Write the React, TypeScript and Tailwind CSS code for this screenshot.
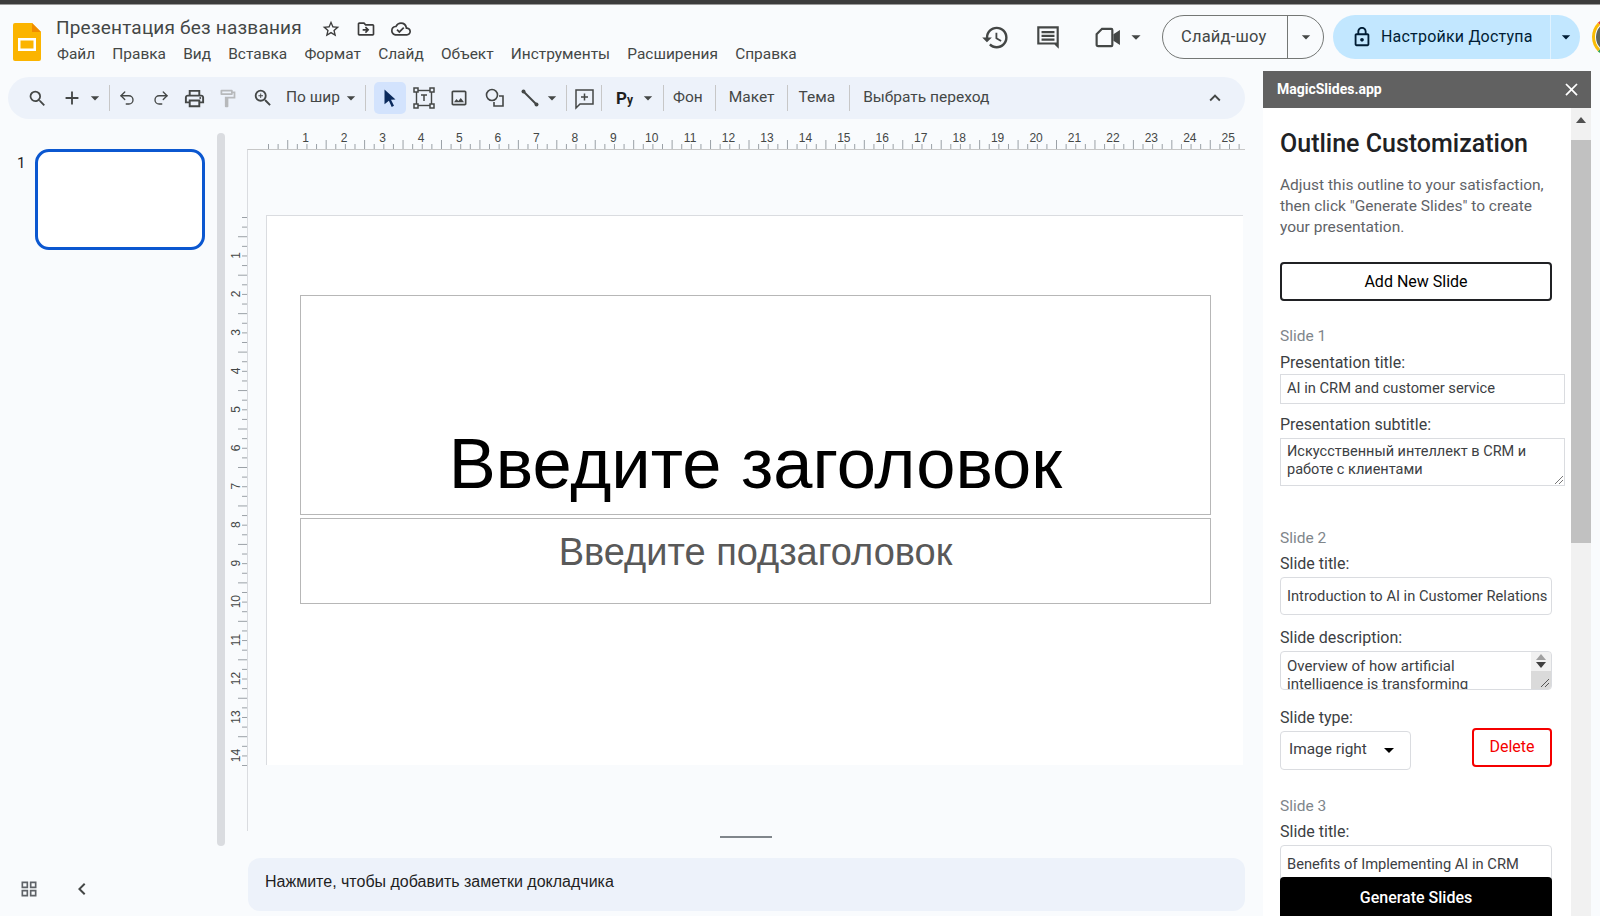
import {
  MdSearch, MdAdd, MdArrowDropDown, MdOutlinePrint, MdOutlineFormatPaint, MdOutlineZoomIn,
  MdOutlineImage, MdExpandLess, MdHistory, MdOutlineLock, MdStarBorder,
  MdOutlineDriveFileMove, MdOutlineCloudDone, MdClose, MdOutlineGridView, MdChevronLeft,
} from 'react-icons/md'
import { Undo2, Redo2 } from 'lucide-react'

const sans = 'font-["Roboto",sans-serif]'
const menu = ['Файл', 'Правка', 'Вид', 'Вставка', 'Формат', 'Слайд', 'Объект', 'Инструменты', 'Расширения', 'Справка']

function Sep() {
  return <div className="w-px h-[26px] bg-[#c7c7c7] mx-[4px] shrink-0" />
}

function TopRuler() {
  const ticks = []
  for (let i = 0; i < 102; i++) {
    const x = 0.5 + i * 9.61
    const long = i % 4 === 2
    ticks.push(<line key={i} x1={x} x2={x} y1={long ? 9 : 13} y2={18} stroke="#9aa0a6" strokeWidth="1" />)
  }
  const labels = []
  for (let n = 1; n <= 25; n++) {
    labels.push(
      <text key={n} x={37.7 + (n - 1) * 38.44} y={11} textAnchor="middle" fontSize="12" fill="#444746" fontFamily="Liberation Sans">{n}</text>
    )
  }
  return (
    <svg width="976" height="18" className="block">
      {ticks}
      {labels}
    </svg>
  )
}

function LeftRuler() {
  const ticks = []
  for (let i = 0; i < 58; i++) {
    const y = 0.5 + i * 9.615
    const long = i % 4 === 2
    ticks.push(<line key={i} x1={long ? 9 : 13} x2="18" y1={y} y2={y} stroke="#9aa0a6" />)
  }
  const labels = []
  for (let n = 1; n <= 14; n++) {
    const y = 38.5 + (n - 1) * 38.46
    labels.push(
      <text key={n} x="0" y="0" transform={`translate(11 ${y}) rotate(-90)`} textAnchor="middle" fontSize="12" fill="#444746" fontFamily="Liberation Sans">{n}</text>
    )
  }
  return <svg width="18" height="549" className="block">{ticks}{labels}</svg>
}

function PanelLabel({ children }: { children: React.ReactNode }) {
  return <div className="text-[16px] leading-[20px] text-[#3c4043]">{children}</div>
}

function SlideTag({ children }: { children: React.ReactNode }) {
  return <div className="text-[15.500px] leading-[20px] text-[#80868b]">{children}</div>
}

export default function App() {
  return (
    <div className={`w-[1600px] h-[916px] overflow-hidden bg-[#f9fbfd] flex flex-col ${sans}`}>
      <div className="h-[5px] shrink-0 bg-[#3c3c3c] border-b border-[#9a9a9a]" />

      {/* header */}
      <header className="h-[66px] shrink-0 flex items-start">
        <svg width="28" height="38" viewBox="0 0 28 38" className="ml-[13px] mt-[18px] shrink-0">
          <path d="M2 0h17l9 9v27a2 2 0 0 1-2 2H2a2 2 0 0 1-2-2V2a2 2 0 0 1 2-2z" fill="#fbb400" />
          <path d="M19 0l9 9h-9z" fill="#f08c00" />
          <path d="M5 15h18v13H5zM7.500 17.500v8h13v-8z" fill="#fff" fillRule="evenodd" />
        </svg>
        <div className="ml-[15px] pt-[11px]">
          <div className="flex items-center h-[24px]">
            <span className="text-[19px] tracking-[0.2px] leading-[24px] text-[#444746]">Презентация без названия</span>
            <MdStarBorder className="ml-[19px] mt-[2px] text-[20px] text-[#3c3c3c]" />
            <MdOutlineDriveFileMove className="ml-[15px] mt-[2px] text-[20px] text-[#3c3c3c]" />
            <MdOutlineCloudDone className="ml-[15px] mt-[2px] text-[20px] text-[#3c3c3c]" />
          </div>
          <nav className="flex gap-[17.200px] ml-[1px] mt-[4px] text-[15.450px] leading-[20px] text-[#444746]">
            {menu.map((m) => <span key={m}>{m}</span>)}
          </nav>
        </div>
        <div className="ml-auto -mr-[32px] flex items-center h-[44px] mt-[10px]">
          <MdHistory className="text-[29px] text-[#444746]" />
          <svg width="28" height="28" viewBox="0 0 26 26" className="ml-[24px]">
            <path d="M3 3h20v21l-4-4H3z M5 5v13h16V5z" fill="#444746" fillRule="evenodd" />
            <path d="M7 7.500h12v2H7zM7 11h12v2H7zM7 14.500h12v2H7z" fill="#444746" />
          </svg>
          <svg width="26" height="21" viewBox="0 0 24 19" className="ml-[33px]">
            <path d="M6.500 1.500H15a1 1 0 0 1 1 1v14a1 1 0 0 1-1 1H3a1.500 1.500 0 0 1-1.500-1.500V6.500z" fill="none" stroke="#444746" strokeWidth="2" />
            <path d="M17 6.500l6-4v14l-6-4z" fill="#444746" />
          </svg>
          <MdArrowDropDown className="ml-[4px] text-[22px] text-[#444746]" />
          <div className="ml-[15px] h-[44px] w-[162px] rounded-full border border-[#747775] flex items-center text-[16.500px] tracking-[0.2px] text-[#444746]">
            <span className="w-[124px] pl-[18px] pt-[1px]">Слайд-шоу</span>
            <div className="w-px h-full bg-[#747775]" />
            <div className="flex-1 flex justify-center"><MdArrowDropDown className="text-[20px]" /></div>
          </div>
          <div className="ml-[9px] h-[44px] w-[247px] rounded-full bg-[#c2e7ff] flex items-center text-[16px] tracking-[0.2px] text-[#001d35]">
            <MdOutlineLock className="ml-[18px] text-[22px]" />
            <span className="ml-[8px] w-[169px] whitespace-nowrap">Настройки Доступа</span>
            <div className="w-px h-full bg-[#e0f2ff]" />
            <div className="flex-1 flex justify-center"><MdArrowDropDown className="text-[20px]" /></div>
          </div>
          <div className="ml-[12px] w-[40px] h-[40px] rounded-full shrink-0 border-[3px] border-t-[#ea4335] border-l-[#fbbc04] border-b-[#34a853] border-r-[#4285f4] p-[1px]">
            <div className="w-full h-full rounded-full bg-[#5f645c]" />
          </div>
        </div>
      </header>

      <div className="flex-1 flex min-h-0">
        {/* left side */}
        <div className="w-[1263px] shrink-0 flex flex-col">
          <div className="mt-[6px] ml-[8px] w-[1237px] h-[42px] rounded-full bg-[#edf2fa] flex items-center text-[#444746] shrink-0 pl-[19px] pr-[19px]">
            <MdSearch className="text-[21px]" />
            <MdAdd className="text-[22px] ml-[13px]" />
            <MdArrowDropDown className="text-[20px] ml-[2px]" />
            <Sep />
            <Undo2 size={18} strokeWidth={1.800} className="ml-[4px]" />
            <Redo2 size={18} strokeWidth={1.800} className="ml-[16px]" />
            <MdOutlinePrint className="text-[23px] ml-[13px]" />
            <MdOutlineFormatPaint className="text-[21px] ml-[11px] text-[#b7b9bb]" />
            <MdOutlineZoomIn className="text-[22px] ml-[14px]" />
            <span className="ml-[12px] text-[15.500px]">По шир</span>
            <MdArrowDropDown className="text-[20px] ml-[1px]" />
            <Sep />
            <div className="ml-[4px] w-[32px] h-[32px] rounded-[5px] bg-[#d3e3fd] flex items-center justify-center">
              <svg width="16" height="20" viewBox="0 0 16 20">
                <path d="M2.500 1.500l11 10-4.500.3 3 6-2.300 1.100-2.800-6.200-4.400 3.600z" fill="#0b2a5c" />
              </svg>
            </div>
            <svg width="22" height="22" viewBox="0 0 22 22" className="ml-[7px]" fill="none" stroke="#444746">
              <rect x="3.500" y="3.500" width="15" height="15" strokeWidth="1.400" />
              <rect x="1" y="1" width="4" height="4" fill="#edf2fa" strokeWidth="1.500" />
              <rect x="17" y="1" width="4" height="4" fill="#edf2fa" strokeWidth="1.500" />
              <rect x="1" y="17" width="4" height="4" fill="#edf2fa" strokeWidth="1.500" />
              <rect x="17" y="17" width="4" height="4" fill="#edf2fa" strokeWidth="1.500" />
              <path d="M8 8h6M11 8v6" strokeWidth="1.500" />
            </svg>
            <MdOutlineImage className="text-[20px] ml-[14px]" />
            <svg width="22" height="22" viewBox="0 0 22 22" className="ml-[15px]" fill="none" stroke="#444746" strokeWidth="1.600">
              <circle cx="8" cy="8" r="5.500" />
              <path d="M15 9h4v10H10v-4" />
            </svg>
            <svg width="20" height="20" viewBox="0 0 20 20" className="ml-[14px]">
              <path d="M3 3l14 14" stroke="#444746" strokeWidth="2" />
              <circle cx="3.500" cy="3.500" r="2" fill="#444746" />
              <circle cx="16.500" cy="16.500" r="2" fill="#444746" />
            </svg>
            <MdArrowDropDown className="text-[20px] ml-[2px]" />
            <Sep />
            <svg width="23" height="23" viewBox="0 0 23 23" className="ml-[2px] shrink-0" fill="none" stroke="#444746" strokeWidth="1.500">
              <path d="M3 3h17v14H7l-4 4z" />
              <path d="M11.500 6.500v7M8 10h7" />
            </svg>
            <div className="w-px h-[26px] bg-[#c7c7c7] ml-[5px] mr-[4px] shrink-0" />
            <span className="ml-[10px] font-bold text-[17px] text-[#1f1f1f] leading-none">Р<span className="text-[12px]">у</span></span>
            <MdArrowDropDown className="text-[20px] ml-[5px]" />
            <div className="w-px h-[26px] bg-[#c7c7c7] ml-[5px] mr-[4px] shrink-0" />
            <span className="ml-[5px] text-[15.500px]">Фон</span>
            <div className="w-px h-[26px] bg-[#c7c7c7] ml-[12px] mr-[13px] shrink-0" />
            <span className="text-[15.500px]">Макет</span>
            <div className="w-px h-[26px] bg-[#c7c7c7] ml-[12px] mr-[11px] shrink-0" />
            <span className="text-[15.500px]">Тема</span>
            <div className="w-px h-[26px] bg-[#c7c7c7] ml-[14px] mr-[13px] shrink-0" />
            <span className="text-[15.500px]">Выбрать переход</span>
            <MdExpandLess className="ml-auto text-[22px]" />
          </div>

          <div className="flex-1 flex min-h-0 pt-[12px]">
            {/* filmstrip */}
            <div className="w-[225px] shrink-0 flex flex-col pt-[2px]">
              <div className="flex flex-1 min-h-0">
                <div className="w-[217px] flex pt-[16px]">
                  <span className="ml-[17px] mt-[4px] w-[18px] text-[15px] leading-[20px] text-[#1f1f1f]">1</span>
                  <div className="w-[170px] h-[101px] rounded-[14px] border-[3px] border-[#0b57d0] bg-white" />
                </div>
                <div className="w-[8px] h-[713px] rounded-full bg-[#dadce0]" />
              </div>
              <div className="h-[60px] shrink-0 flex items-center pl-[19px] pt-[6px]">
                <MdOutlineGridView className="text-[20px] text-[#5f6368]" />
                <MdChevronLeft className="ml-[31px] text-[24px] text-[#444746]" />
              </div>
            </div>

            {/* vertical ruler */}
            <div className="w-[22px] shrink-0 pt-[86px] pl-[4px]">
              <LeftRuler />
            </div>

            {/* canvas */}
            <div className="w-[998px] shrink-0 flex flex-col">
              <div className="h-[18px] shrink-0 pl-[21px]">
                <TopRuler />
              </div>
              <div className="h-[682px] shrink-0 border-l border-t border-l-[#dadce0] border-t-[#c7c7c7] overflow-hidden">
                <div className="mt-[65px] ml-[18px] w-[977px] h-[550px] bg-white border-l border-t border-[#dadce0] overflow-hidden">
                  <div className="ml-[33px] mt-[79px] w-[911px] h-[220px] border border-[#b7b7b7] flex items-end justify-center">
                    <span className="font-['Liberation_Sans',sans-serif] text-[70.500px] leading-[82px] pb-[9px] text-black">Введите заголовок</span>
                  </div>
                  <div className="ml-[33px] mt-[3px] w-[911px] h-[86px] border border-[#b7b7b7] flex justify-center">
                    <span className="font-['Liberation_Sans',sans-serif] text-[38px] leading-[44px] pt-[11px] text-[#595959]">Введите подзаголовок</span>
                  </div>
                </div>
              </div>
              <div className="h-[27px] shrink-0 flex justify-center pt-[5px]">
                <div className="w-[52px] h-[2px] bg-[#80868b]" />
              </div>
              <div className="ml-[1px] h-[53px] shrink-0 rounded-[12px] bg-[#edf2fa] flex items-center pl-[17px] pb-[6px] font-['Liberation_Sans',sans-serif] text-[16px] text-[#1f1f1f]">
                Нажмите, чтобы добавить заметки докладчика
              </div>
            </div>
          </div>
        </div>

        {/* MagicSlides panel */}
        <aside className="w-[328px] shrink-0 flex flex-col bg-white relative">
          <div className="h-[37px] shrink-0 bg-[#616161] flex items-center justify-between pl-[14px] pr-[9px] text-white">
            <span className="text-[14px] font-bold">MagicSlides.app</span>
            <MdClose className="text-[21px]" />
          </div>
          <div className="flex-1 min-h-0 flex">
            <div className="w-[308px] overflow-hidden pl-[17px] pr-[2px] relative">
              <h1 className="mt-[20px] text-[25px] leading-[32px] font-medium text-[#202124]">Outline Customization</h1>
              <p className="mt-[15px] w-[272px] text-[15.500px] leading-[21px] text-[#5f6368]">
                Adjust this outline to your satisfaction, then click "Generate Slides" to create your presentation.
              </p>
              <button className="mt-[23.500px] w-[272px] h-[39px] rounded-[4px] border-2 border-[#202124] text-[16px] text-black pt-[1px]">Add New Slide</button>

              <div className="mt-[25px]"><SlideTag>Slide 1</SlideTag></div>
              <div className="mt-[7px]"><PanelLabel>Presentation title:</PanelLabel></div>
              <div className="mt-[1px] w-[285px] h-[30px] border border-[#dadce0] flex items-center pl-[6px] text-[14.700px] text-[#3c4043]">AI in CRM and customer service</div>
              <div className="mt-[11px]"><PanelLabel>Presentation subtitle:</PanelLabel></div>
              <div className="relative mt-[3px] w-[285px] h-[48px] border border-[#dadce0] pl-[6px] pt-[4px] text-[14.500px] leading-[18.500px] text-[#3c4043]">
                <div className="w-[260px]">Искусственный интеллект в CRM и работе с клиентами</div>
                <svg width="10" height="10" viewBox="0 0 10 10" className="absolute right-0 bottom-0" stroke="#777">
                  <path d="M1 9l8-8M5 9l4-4" />
                </svg>
              </div>

              <div className="mt-[42px]"><SlideTag>Slide 2</SlideTag></div>
              <div className="mt-[6px]"><PanelLabel>Slide title:</PanelLabel></div>
              <div className="mt-[3px] w-[272px] h-[38px] rounded-[4px] border border-[#dadce0] flex items-center pl-[6px] pt-[2px] text-[14.700px] text-[#3c4043] whitespace-nowrap overflow-hidden">Introduction to AI in Customer Relations</div>
              <div className="mt-[13px]"><PanelLabel>Slide description:</PanelLabel></div>
              <div className="relative mt-[3px] w-[272px] h-[39px] rounded-[4px] border border-[#dadce0] overflow-hidden pl-[6px] pt-[5px] text-[15px] leading-[18.500px] text-[#3c4043]">
                <div className="w-[225px]">Overview of how artificial intelligence is transforming</div>
                <div className="absolute right-0 top-0 bottom-0 w-[20px] bg-[#dadada] flex flex-col items-center">
                  <div className="w-full h-[19px] bg-[#f1f1f1] flex flex-col items-center justify-center gap-[2px]">
                    <div className="w-0 h-0 border-x-[5px] border-x-transparent border-b-[6px] border-b-[#a0a0a0]" />
                    <div className="w-0 h-0 border-x-[5px] border-x-transparent border-t-[6px] border-t-[#404040]" />
                  </div>
                </div>
                <svg width="10" height="10" viewBox="0 0 10 10" className="absolute right-[1px] bottom-[1px]" stroke="#555">
                  <path d="M1 9l8-8M5 9l4-4" />
                </svg>
              </div>
              <div className="mt-[18px]"><PanelLabel>Slide type:</PanelLabel></div>
              <div className="flex items-start w-[272px]">
                <div className="mt-[3px] w-[131px] h-[39px] rounded-[4px] border border-[#dadce0] flex items-center justify-between pl-[8px] pr-[16px] text-[15.400px] text-[#3c4043]">
                  Image right
                  <div className="w-0 h-0 border-x-[5px] border-x-transparent border-t-[5px] border-t-black" />
                </div>
                <button className="ml-auto w-[80px] h-[39px] rounded-[4px] border-2 border-[#f50000] text-[16px] text-[#f50000]">Delete</button>
              </div>

              <div className="mt-[26px]"><SlideTag>Slide 3</SlideTag></div>
              <div className="mt-[6px]"><PanelLabel>Slide title:</PanelLabel></div>
              <div className="mt-[3px] w-[272px] h-[38px] rounded-[4px] border border-[#dadce0] flex items-center pl-[6px] pt-[2px] text-[14.700px] text-[#3c4043] whitespace-nowrap overflow-hidden">Benefits of Implementing AI in CRM</div>

              <button className="absolute left-[17px] bottom-0 w-[272px] h-[39px] rounded-t-[4px] bg-black text-white text-[16px] font-medium pt-[2px]">Generate Slides</button>
            </div>
            <div className="flex-1 bg-[#f1f1f1] flex flex-col">
              <div className="h-[32px] flex items-start justify-center pt-[9px]">
                <div className="w-0 h-0 border-x-[5px] border-x-transparent border-b-[6px] border-b-[#505050]" />
              </div>
              <div className="h-[403px] bg-[#c1c1c1]" />
            </div>
          </div>
        </aside>
      </div>
    </div>
  )
}
